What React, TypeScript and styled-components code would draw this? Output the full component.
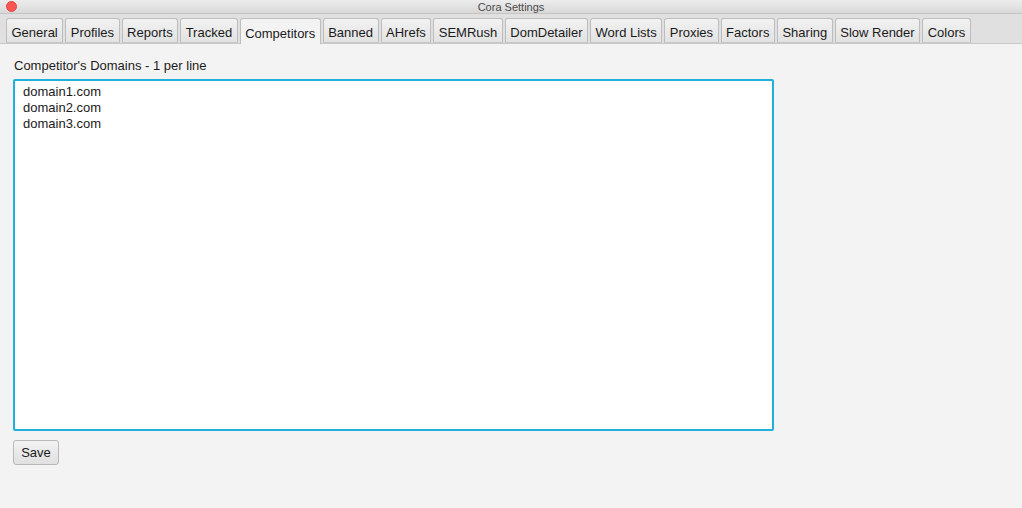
import React, { useState } from 'react'
import styled, { createGlobalStyle } from 'styled-components'

const GlobalStyle = createGlobalStyle`
    html, body {
        margin: 0;
        padding: 0;
        height: 100%;
        background: #f3f3f3;
        font-family: "Liberation Sans", Arial, sans-serif;
    }
    #root {
        height: 100%;
    }
`

const tabNames = [
    'General', 'Profiles', 'Reports', 'Tracked', 'Competitors', 'Banned', 'AHrefs',
    'SEMRush', 'DomDetailer', 'Word Lists', 'Proxies', 'Factors', 'Sharing', 'Slow Render', 'Colors',
]

const Window = styled.div`
    display: flex;
    flex-direction: column;
    height: 508px;
    width: 1022px;
    background: #f3f3f3;
`

const TitleBar = styled.div`
    position: relative;
    height: 13px;
    display: flex;
    align-items: center;
    justify-content: center;
    background: linear-gradient(#ececec, #d9d9d9);
    border-bottom: 1px solid #c4c4c4;
    font-size: 11px;
    color: #4a4a4a;
`

const CloseDot = styled.span`
    position: absolute;
    left: 6px;
    top: 1px;
    width: 11px;
    height: 11px;
    border-radius: 50%;
    background: #fc5753;
    border: 0.5px solid #df4744;
    box-sizing: border-box;
`

const TabStrip = styled.div`
    display: flex;
    align-items: flex-end;
    gap: 2px;
    height: 30px;
    padding-left: 6px;
    background: #e0e0e0;
    border-bottom: 1px solid #c8c8c8;
    box-sizing: border-box;
`

const Tab = styled.button<{ $active?: boolean }>`
    height: ${p => (p.$active ? '26px' : '25px')};
    margin-bottom: ${p => (p.$active ? '-1px' : '0')};
    padding: 3px 4.5px 0;
    font-family: inherit;
    font-size: 13px;
    color: #1a1a1a;
    border: 1px solid #bdbdbd;
    border-bottom: ${p => (p.$active ? 'none' : '1px solid #c8c8c8')};
    border-radius: 3px 3px 0 0;
    background: ${p => (p.$active ? '#f3f3f3' : 'linear-gradient(#f2f2f2, #e2e2e2)')};
    cursor: default;
    outline: none;
`

const Content = styled.div`
    display: flex;
    flex-direction: column;
    align-items: flex-start;
    padding: 14px 13px 0;
`

const Label = styled.div`
    font-size: 13px;
    color: #1c1c1c;
    margin-bottom: 6px;
    padding-left: 1px;
`

const Editor = styled.textarea`
    width: 761px;
    height: 352px;
    box-sizing: border-box;
    border: 2px solid #1fb0dc;
    border-radius: 2px;
    padding: 3px 8px;
    font-family: inherit;
    font-size: 13px;
    line-height: 16px;
    color: #1a1a1a;
    background: #fff;
    resize: none;
    outline: none;
`

const SaveButton = styled.button`
    margin-top: 9px;
    height: 25px;
    width: 46px;
    font-family: inherit;
    font-size: 13px;
    color: #1a1a1a;
    border: 1px solid #b8b8b8;
    border-radius: 3px;
    background: linear-gradient(#f2f2f2, #e0e0e0);
    padding: 0;
`

export default function App() {
    const [active, setActive] = useState('Competitors')
    const [text, setText] = useState('domain1.com\ndomain2.com\ndomain3.com')

    return (
        <Window>
            <GlobalStyle />
            <TitleBar>
                <CloseDot />
                Cora Settings
            </TitleBar>
            <TabStrip>
                {tabNames.map(name => (
                    <Tab key={name} $active={name === active} onClick={() => setActive(name)}>
                        {name}
                    </Tab>
                ))}
            </TabStrip>
            <Content>
                <Label>Competitor's Domains - 1 per line</Label>
                <Editor value={text} onChange={e => setText(e.target.value)} spellCheck={false} />
                <SaveButton>Save</SaveButton>
            </Content>
        </Window>
    )
}
